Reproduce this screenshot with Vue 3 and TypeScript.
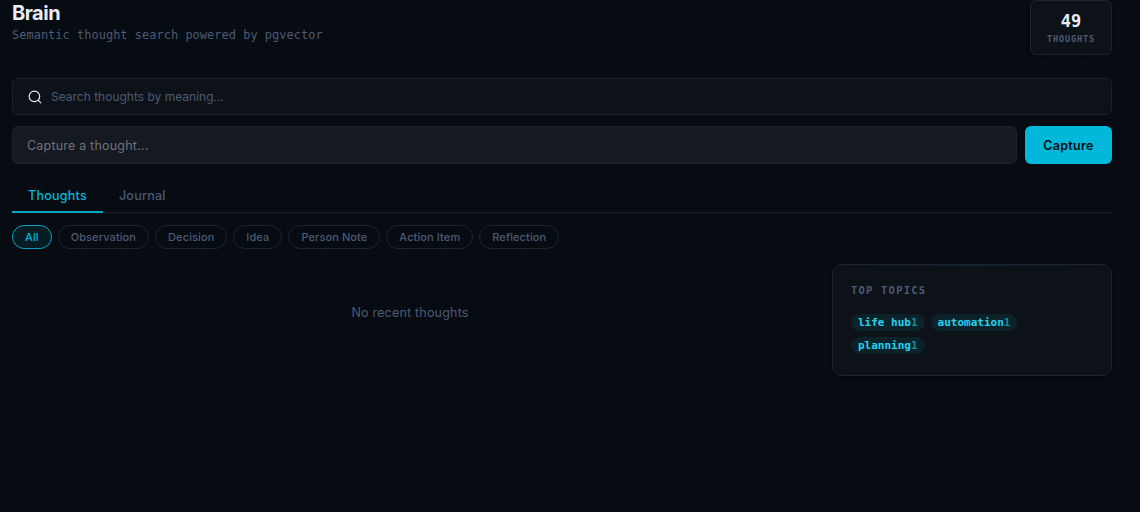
<script setup lang="ts">
import { ref } from 'vue'

interface Topic {
  name: string
  count: number
}

const total = ref<number>(49)
const query = ref<string>('')
const draft = ref<string>('')
const tabs: string[] = ['Thoughts', 'Journal']
const activeTab = ref<string>('Thoughts')
const filters: string[] = ['All', 'Observation', 'Decision', 'Idea', 'Person Note', 'Action Item', 'Reflection']
const activeFilter = ref<string>('All')
const topics: Topic[] = [
  { name: 'life hub', count: 1 },
  { name: 'automation', count: 1 },
  { name: 'planning', count: 1 },
]
</script>

<template>
  <main class="page">
    <header class="header">
      <div>
        <h1 class="title">Brain</h1>
        <p class="subtitle">Semantic thought search powered by pgvector</p>
      </div>
      <div class="stat">
        <span class="stat-value">{{ total }}</span>
        <span class="stat-label">THOUGHTS</span>
      </div>
    </header>

    <label class="search">
      <svg class="search-icon" viewBox="0 0 24 24" fill="none" stroke="currentColor" stroke-width="2" stroke-linecap="round" stroke-linejoin="round">
        <circle cx="11" cy="11" r="9" />
        <path d="M22 22l-4.3-4.3" />
      </svg>
      <input v-model="query" class="search-input" type="text" placeholder="Search thoughts by meaning..." />
    </label>

    <form class="capture" @submit.prevent>
      <input v-model="draft" class="capture-input" type="text" placeholder="Capture a thought..." />
      <button class="capture-button" type="submit">Capture</button>
    </form>

    <nav class="tabs">
      <button v-for="tab in tabs" :key="tab" class="tab" :class="{ active: tab === activeTab }" @click="activeTab = tab">{{ tab }}</button>
    </nav>

    <div class="filters">
      <button v-for="f in filters" :key="f" class="chip" :class="{ active: f === activeFilter }" @click="activeFilter = f">{{ f }}</button>
    </div>

    <div class="content">
      <section class="empty">No recent thoughts</section>
      <aside class="topics">
        <h2 class="topics-title">TOP TOPICS</h2>
        <div class="topic-list">
          <span v-for="t in topics" :key="t.name" class="topic">{{ t.name }}<span class="topic-count">{{ t.count }}</span></span>
        </div>
      </aside>
    </div>
  </main>
</template>

<style>
body {
  background: #070b12;
  overflow: hidden;
}
</style>

<style scoped>
* {
  box-sizing: border-box;
}
.page {
  height: 512px;
  padding: 0 28px 0 12px;
  background-color: #070b12;
  background-image:
    linear-gradient(rgba(0, 188, 212, 0.016) 1px, transparent 1px),
    linear-gradient(90deg, rgba(0, 188, 212, 0.016) 1px, transparent 1px);
  background-size: 40px 40px;
  background-position: 1px 12px;
  font-family: Inter, sans-serif;
  color: #e8edf5;
  overflow: hidden;
}
button,
input {
  font-family: inherit;
  margin: 0;
}
.header {
  display: flex;
  justify-content: space-between;
  align-items: flex-start;
  height: 78px;
}
.title {
  margin: 1px 0 0;
  font-size: 20px;
  line-height: 24px;
  font-weight: 700;
  letter-spacing: -0.5px;
}
.subtitle {
  margin: 3px 0 0;
  font: 12px/14px 'DejaVu Sans Mono', monospace;
  color: #4c5b74;
}
.stat {
  display: flex;
  flex-direction: column;
  align-items: center;
  width: 82px;
  height: 55px;
  padding-top: 10px;
  border: 1px solid #1c2433;
  border-radius: 6px;
  background: #0d1118;
  box-shadow: 0 1px 4px rgba(0, 0, 0, 0.4);
  font-family: 'DejaVu Sans Mono', monospace;
}
.stat-value {
  font-size: 17px;
  line-height: 20px;
  font-weight: 700;
}
.stat-label {
  margin-top: 3px;
  font-size: 8.6px;
  line-height: 11px;
  font-weight: 600;
  letter-spacing: 0.8px;
  color: #4c5b74;
}
.search {
  display: flex;
  align-items: center;
  gap: 9px;
  height: 37px;
  padding: 0 15px;
  border: 1px solid #1a2130;
  border-radius: 6px;
  background: #0d1118;
}
.search-icon {
  width: 14px;
  height: 14px;
  color: #e8edf5;
}
.search-input {
  flex: 1;
  padding: 0;
  border: 0;
  outline: 0;
  background: transparent;
  color: #e8edf5;
  font-size: 12px;
}
.search-input::placeholder {
  color: #4c5b74;
}
.capture {
  display: flex;
  gap: 8px;
  height: 38px;
  margin-top: 11px;
}
.capture-input {
  flex: 1;
  padding: 0 14px;
  border: 1px solid #1c2333;
  border-radius: 6px;
  outline: 0;
  background: #151922;
  color: #e8edf5;
  font-size: 12.5px;
  letter-spacing: 0.2px;
}
.capture-input::placeholder {
  color: #6f7278;
}
.capture-button {
  width: 87px;
  padding: 0;
  border: 0;
  border-radius: 6px;
  background: #00b8d9;
  color: #070b12;
  font-size: 12.5px;
  font-weight: 600;
  letter-spacing: 0.3px;
}
.tabs {
  display: flex;
  height: 36px;
  margin-top: 13px;
  border-bottom: 1px solid #151b27;
  box-shadow: 0 1px 0 #0c111a;
}
.tab {
  height: 36px;
  padding: 3px 16px 0;
  border: 0;
  border-bottom: 2px solid transparent;
  background: transparent;
  color: #4c5b74;
  font-size: 12.5px;
  font-weight: 500;
  letter-spacing: 0.25px;
}
.tab.active {
  border-bottom-color: #00a8c6;
  color: #00b8d9;
}
.filters {
  display: flex;
  gap: 6px;
  margin-top: 12px;
}
.chip {
  height: 24px;
  padding: 0 12px;
  border: 1px solid #1c2433;
  border-radius: 12px;
  background: transparent;
  color: #4c5b74;
  font-size: 11px;
  font-weight: 500;
  letter-spacing: 0.1px;
}
.chip.active {
  border-color: #00a3bf;
  background: #061c24;
  color: #00b8d9;
}
.content {
  display: grid;
  grid-template-columns: 1fr 280px;
  gap: 24px;
  align-items: start;
  margin-top: 15px;
}
.empty {
  padding-top: 41px;
  text-align: center;
  font-size: 12.5px;
  line-height: 16px;
  letter-spacing: 0.2px;
  color: #4c5b74;
}
.topics {
  height: 112px;
  padding: 18px;
  border: 1px solid #1c2333;
  border-radius: 10px;
  background:
    linear-gradient(90deg, transparent 10%, rgba(0, 188, 212, 0.1), transparent 90%) top / 100% 1px no-repeat,
    #0d1118;
  box-shadow: 0 1px 4px rgba(0, 0, 0, 0.4);
  font-family: 'DejaVu Sans Mono', monospace;
}
.topics-title {
  margin: 0;
  font-size: 10.5px;
  line-height: 14px;
  font-weight: 600;
  letter-spacing: 1.2px;
  color: #4c5b74;
}
.topic-list {
  display: flex;
  flex-wrap: wrap;
  gap: 6px;
  margin-top: 17px;
}
.topic {
  height: 17px;
  padding: 0 7px;
  border-radius: 9px;
  background: #0c222b;
  color: #22d3ee;
  font-size: 11px;
  line-height: 17px;
  font-weight: 600;
}
.topic-count {
  opacity: 0.6;
}
</style>
